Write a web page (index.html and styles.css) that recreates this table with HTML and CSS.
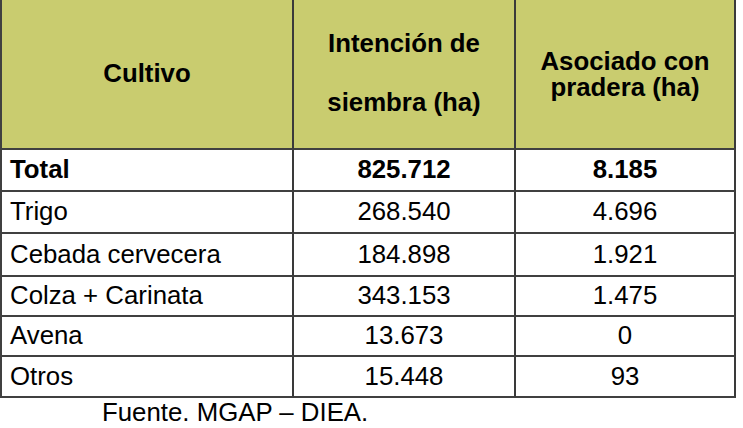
FILE: index.html
```html
<!DOCTYPE html>
<html lang="es">
<head>
<meta charset="utf-8">
<title>Cultivos</title>
<link rel="stylesheet" href="styles.css">
</head>
<body>
<div class="tabla">
  <div class="cell head">Cultivo</div>
  <div class="cell head wide">Intención de<br>siembra (ha)</div>
  <div class="cell head tight">Asociado con<br>pradera (ha)</div>

  <div class="cell name bold">Total</div>
  <div class="cell num bold">825.712</div>
  <div class="cell num bold">8.185</div>

  <div class="cell name">Trigo</div>
  <div class="cell num">268.540</div>
  <div class="cell num">4.696</div>

  <div class="cell name">Cebada cervecera</div>
  <div class="cell num">184.898</div>
  <div class="cell num">1.921</div>

  <div class="cell name">Colza + Carinata</div>
  <div class="cell num">343.153</div>
  <div class="cell num">1.475</div>

  <div class="cell name">Avena</div>
  <div class="cell num">13.673</div>
  <div class="cell num">0</div>

  <div class="cell name">Otros</div>
  <div class="cell num">15.448</div>
  <div class="cell num">93</div>
</div>
<p class="fuente">Fuente. MGAP – DIEA.</p>
</body>
</html>
```
FILE: styles.css
```css
html, body {
  margin: 0;
  padding: 0;
  background: #ffffff;
}
body {
  font-family: "Liberation Sans", Arial, sans-serif;
  font-size: 25.8px;
  color: #000000;
}
.tabla {
  display: grid;
  grid-template-columns: 292px 222px 220px;
  grid-template-rows: 150px 42px 42px 43px 40px 40px 41px;
  width: 734px;
  border-left: 2px solid #404040;
}
.cell {
  box-sizing: border-box;
  border-right: 2px solid #3a3a3a;
  border-bottom: 2px solid #404040;
  display: flex;
  align-items: center;
  line-height: 1.15;
  white-space: nowrap;
}
.head {
  background: #c9cc6f;
  font-weight: bold;
  justify-content: center;
  text-align: center;
}
.head.wide {
  line-height: 59.4px;
  padding-bottom: 2px;
}
.head.tight {
  line-height: 26px;
}
.name {
  padding-left: 8px;
}
.num {
  justify-content: center;
}
.bold {
  font-weight: bold;
}
.fuente {
  margin: 0;
  padding-left: 102px;
  line-height: 1.15;
}
```
